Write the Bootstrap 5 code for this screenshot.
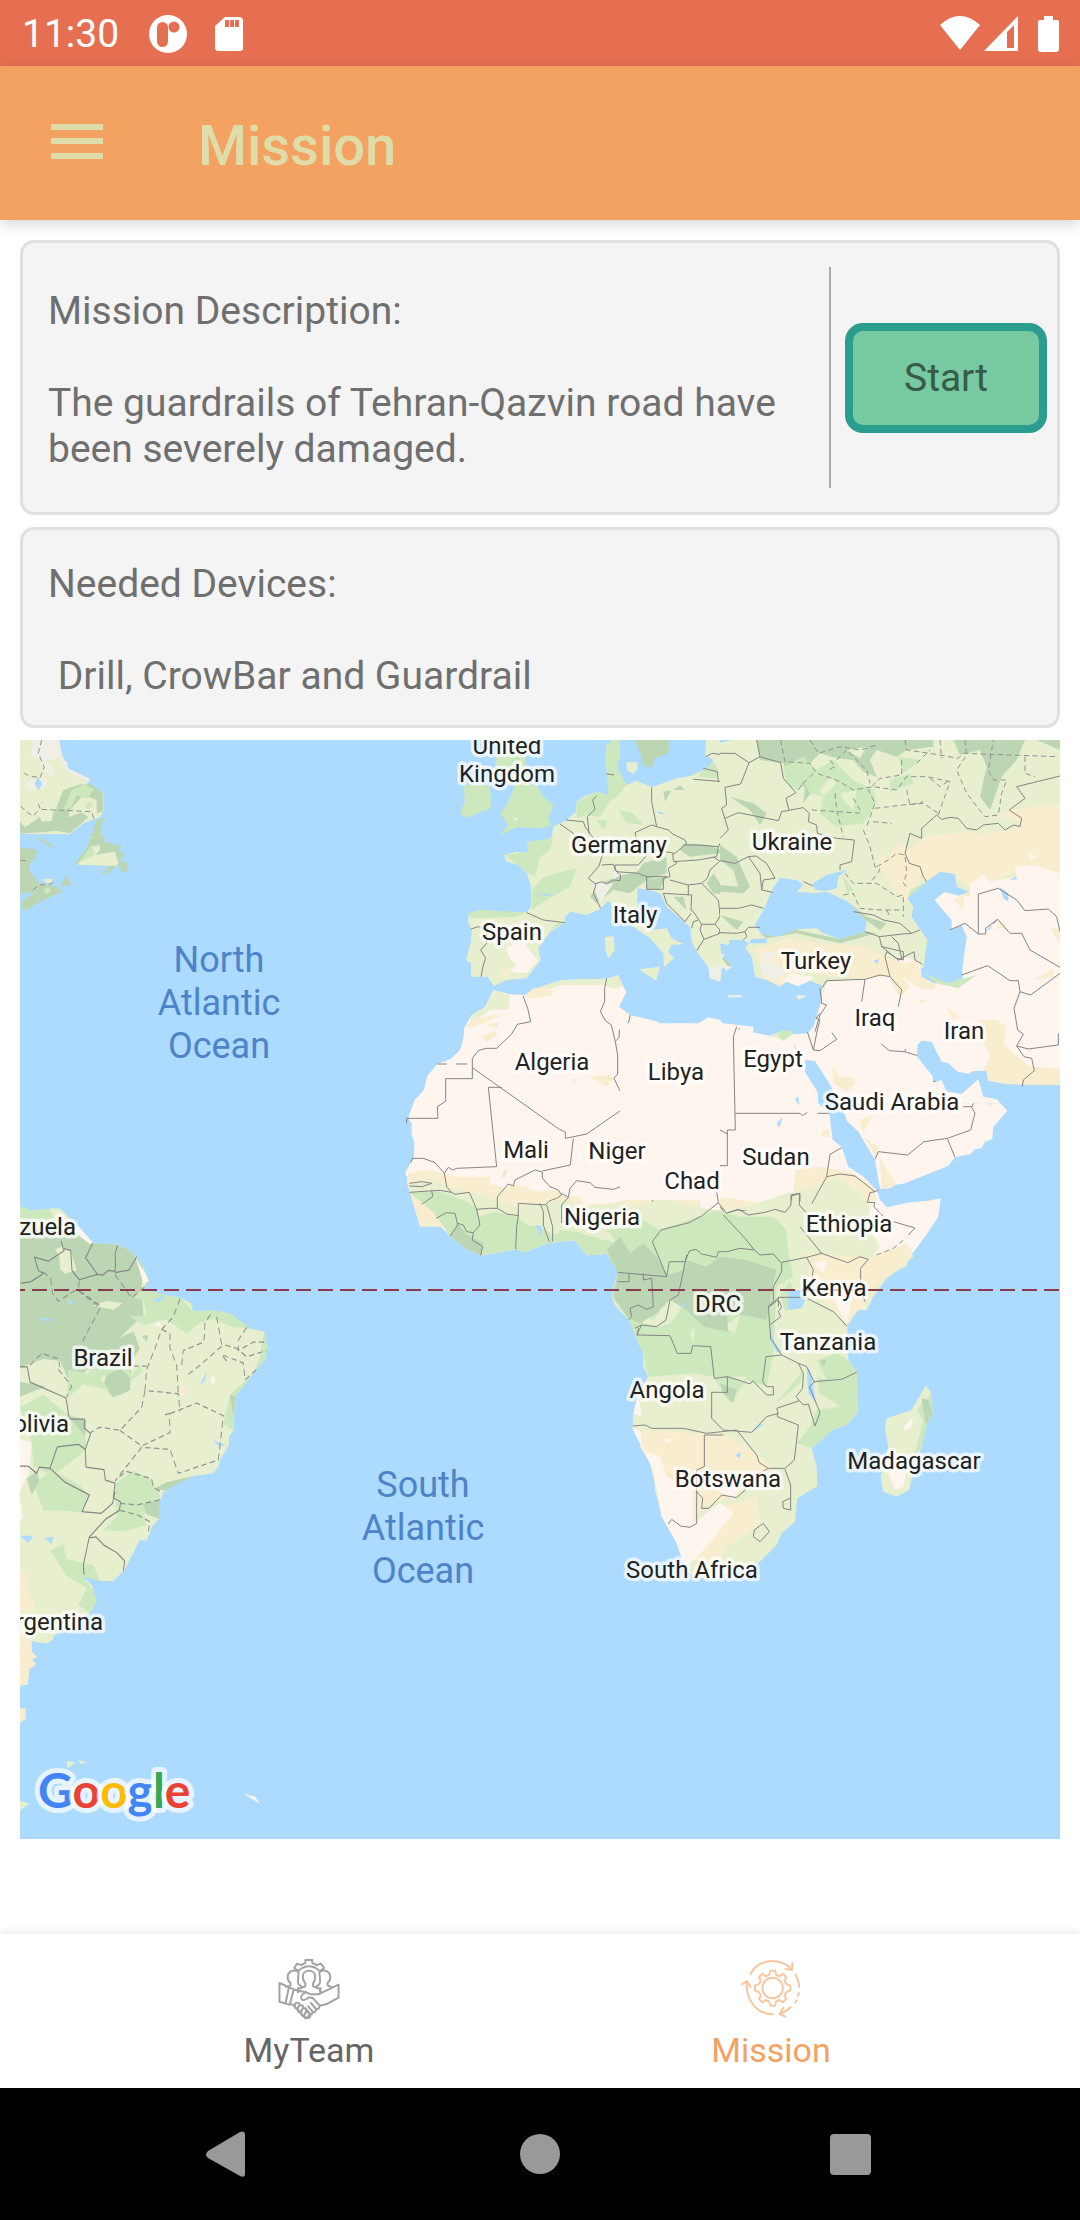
<!DOCTYPE html>
<html lang="en">
<head>
<meta charset="utf-8">
<meta name="viewport" content="width=device-width, initial-scale=1">
<title>Mission</title>
<link rel="stylesheet" href="https://cdn.jsdelivr.net/npm/bootstrap@5.3.0/dist/css/bootstrap.min.css">
<style>
  body { font-family: Roboto, "Liberation Sans", sans-serif; font-size: 39px; line-height: 46px; color: #6f6f6f; background: #fff; }
  .status-bar { height: 66px; background: #e76f51; color: #fff; padding: 2px 20px 0 22px; }
  .app-bar { height: 154px; background: #f4a261; padding: 0 48px; box-shadow: 0 4px 14px rgba(0,0,0,.16); z-index: 1; }
  .app-title { font-size: 56px; line-height: 64px; font-weight: 500; color: #deddaa; margin: 6px 0 0 92px; }
  .menu-btn { color: #deddaa; width: 58px; height: 58px; margin-bottom: 12px; }
  .content { padding: 20px 20px 32px; gap: 12px; }
  .panel { background: #f4f4f4; border: 3px solid #e0e0e0; border-radius: 14px; }
  .panel-main { padding: 24px 10px 24px 25px; }
  .panel-devices { padding: 31px 25px 26px; }
  .copy { padding: 21px 0 16px; }
  .rule { width: 3px; background: #aaa; }
  .start-btn { width: 202px; height: 110px; border: 8px solid #2a9d8f; border-radius: 18px; background: #76c9a0; color: #385b49; font-size: 39px; line-height: 46px; margin-left: 14px; }
  .start-btn:hover { background: #6abf95; border-color: #2a9d8f; color: #385b49; }
  .world { width: 100%; height: auto; background: #addaff; }
  .world text { font-family: Roboto, "Liberation Sans", sans-serif; font-size: 24px; fill: #222; text-anchor: middle; }
  .halo { stroke: #fff; stroke-opacity: .72; stroke-width: 7px; stroke-linejoin: round; paint-order: stroke; }
  .world .ends { text-anchor: end; }
  .world .ocean { font-size: 36px; fill: #4d83c8; }
  .world .brand { font-family: Lato, Roboto, sans-serif; font-size: 48px; text-anchor: start; stroke-width: 10px; }
  .sand { fill: #fff5ef; } .grass { fill: #e7efcf; } .leaf { fill: #cee8be; } .wood { fill: #bcd6b4; } .dune { fill: #f8eecf; } .sea { fill: #addaff; } .snow { fill: #efeee7; }
  .edge { fill: none; stroke: #858585; stroke-width: 3; stroke-linejoin: round; }
  .prov { fill: none; stroke: #929292; stroke-width: 3; stroke-dasharray: 16 10; }
  .tabs { height: 154px; background: #fff; box-shadow: 0 -3px 8px rgba(0,0,0,.07); padding: 0 78px; font-size: 34px; line-height: 40px; }
  .tab-link { color: #666; text-decoration: none; padding: 4px 0 0; gap: 9px; }
  .tab-link.active { color: #f4a261; }
  .line-art { fill: none; stroke-width: 2; stroke-linecap: round; stroke-linejoin: round; }
  .line-art * { vector-effect: non-scaling-stroke; }
  .system-bar { height: 132px; background: #000; gap: 250px; }
  .system-bar button { width: 60px; height: 60px; color: #999; }
</style>
</head>
<body class="d-flex flex-column min-vh-100">

<div class="status-bar d-flex align-items-center justify-content-between">
  <div class="d-flex align-items-center">
    <span>11:30</span>
    <svg class="ms-4" width="50" height="44" viewBox="0 0 50 44" aria-hidden="true"><circle cx="25" cy="22" r="19" fill="#fff"/><rect x="14" y="10" width="11" height="25" rx="5.500" fill="#e76f51"/><circle cx="31" cy="15" r="5.500" fill="#e76f51"/></svg>
    <svg class="ms-3" width="44" height="44" viewBox="-4 0 44 44" aria-hidden="true"><path d="M12 5H26Q30 5 30 9V36Q30 39 27 39H5Q2 39 2 36V14Z" fill="#fff"/><path d="M12 8h4v7h-4zM17 8h4v7h-4zM22 8h4v7h-4z" fill="#e76f51"/></svg>
  </div>
  <svg width="122" height="44" viewBox="0 0 122 44" fill="#fff" aria-hidden="true"><path d="M2 13Q22 -5 42 13L22 38Z"/><path fill-rule="evenodd" d="M46 39 80 4V39ZM69 20V36H76V13Z"/><path d="M106 4h9v4h4q2 0 2 2v27q0 3-3 3h-15q-3 0-3-3V10q0-2 2-2h4Z"/></svg>
</div>

<header class="app-bar d-flex align-items-center position-relative">
  <button class="menu-btn btn p-0 border-0" type="button" aria-label="Open menu"><svg class="d-block" width="58" height="58" viewBox="0 0 58 58" fill="currentColor"><path d="M3 16h52v6H3zM3 30h52v6H3zM3 45h52v6H3z"/></svg></button>
  <h1 class="app-title">Mission</h1>
</header>

<main class="content d-flex flex-column flex-grow-1">
  <section class="panel panel-main d-flex align-items-stretch">
    <div class="copy flex-fill pe-5">
      <p class="mb-0">Mission Description:</p>
      <br>
      <p class="mb-0">The guardrails of Tehran-Qazvin road have been severely damaged.</p>
    </div>
    <div class="rule"></div>
    <button class="start-btn btn p-0 flex-shrink-0 align-self-center" type="button">Start</button>
  </section>

  <section class="panel panel-devices">
    <p class="mb-0">Needed Devices:</p>
    <br>
    <p class="mb-0">&nbsp;Drill, CrowBar and Guardrail</p>
  </section>

  <svg class="world d-block" viewBox="20 740 1040 1099" role="img" aria-label="World map">
    <g transform="scale(.3333333)">
      <!-- Canada and Newfoundland -->
      <g transform="translate(0 2190)">
        <path class="grass" d="M60 30H178L185 70 203 115 270 147 262 160 310 190V245L300 262 250 280 210 313 60 312Z"/>
        <path class="snow" d="M100 30H175L185 70 160 90 140 90 125 110 115 85 92 80ZM135 98 160 108 158 138 130 125ZM75 160 108 148 140 145V170L85 182ZM175 75 203 98V115L270 147 262 155 196 120Z"/>
        <path class="wood" d="M170 230 190 180 235 165 270 160 308 190V245L290 250 290 210 250 195 210 240 205 262 245 247 265 262 210 310 170 303 60 311V275L75 292 120 260 125 275 155 273 160 248Z"/>
        <path class="leaf" d="M215 180 255 162 280 178 262 205 230 195 215 230 190 240 205 205ZM255 228 268 212 280 225 265 240Z"/>
        <path class="sea" d="M113 140 127 162 115 180 104 162Z"/>
        <path class="wood" d="M110 325 130 328 168 354 150 350ZM60 352 112 360 108 380 90 400 90 425 120 460 170 470 185 480 185 487 110 520 80 543 66 535V515L102 487 60 490ZM290 270 315 262 302 290 303 315 315 325 313 335 362 347 358 365 372 370 360 395 383 397 383 425 370 430 355 405 318 433 305 430 330 408 230 405 228 395 260 355Z"/>
        <path class="grass" d="M232 404 275 350 298 345 300 360 285 375 345 365 355 400 350 408ZM125 448 160 446 150 465Z"/>
        <path class="wood" d="M180 470 200 435 213 465Z"/>
        <path class="leaf" d="M240 395 275 345 285 372 265 385ZM130 480 143 470 152 482 140 492ZM268 325 275 318 278 328Z"/>
        <path class="prov" d="M125 30 115 70 133 112 120 143 88 138 62 124M62 228 78 245 100 258 120 235 115 222 128 218M125 238 275 245 282 268M62 391 86 393M98 480 120 465 150 462 165 455"/>
      </g>
      <!-- South America -->
      <g transform="translate(0 3540) scale(1 1.2627)">
        <path class="grass" d="M60 63 95 73 150 68 180 68 240 115 280 150 350 153 395 170 428 205 447 240 425 260 490 272 540 280 572 292 580 312 640 310 690 317 750 353 792 360 803 400 795 425 705 515 700 595 687 610V630L660 665 655 682 640 697 580 703 550 715 525 720 495 738 480 760 478 805 457 822 440 857 420 855 375 925 340 953 300 953 285 943 250 942 278 965V975L290 1000 270 1030 200 1060 160 1085V1092L140 1102 95 1095V1120L112 1133 95 1140 108 1150 88 1163 83 1198 60 1202Z"/>
        <path class="wood" d="M60 130 180 90 240 120 280 150 350 153 395 170 428 205 425 262 430 320 360 375 400 360 420 400 395 430 390 500 340 517 310 490 320 460 260 450 220 500 180 430 130 425 60 445Z"/>
        <path class="leaf" d="M60 63 95 73 150 68 160 90 60 130ZM425 260 540 280 580 312 640 310 690 317 750 353 700 350 640 330 600 340 560 365 500 330 430 345 390 325 440 320 430 285 400 280ZM792 360 803 400 795 425 705 515 700 595 670 580 690 510 760 460 780 420ZM205 450 260 460 300 440 360 445 390 470 420 440 430 455 395 475 385 440 300 470 330 500 250 485 200 520ZM60 540 130 510 200 555 250 570 260 640 180 690 150 700 100 680 95 620ZM100 720 160 690 240 725 265 750 240 790 190 785 130 785ZM345 722 400 690 450 710 480 750 478 805 430 790 440 820 370 835 310 832 350 800ZM150 880 190 865 200 900 280 915 300 953 250 942 280 975 290 1000 270 1030 235 1010 260 970 200 940Z"/>
        <path class="wood" d="M425 370 445 368 440 385ZM430 770 480 760 478 805 440 795ZM60 480 140 490 60 515ZM80 710 110 690 118 715 95 748ZM495 738 580 703 500 718 460 735ZM690 510 706 515 700 560ZM205 560 260 570 255 610Z"/>
        <path class="grass" d="M165 165 185 158 212 168 230 215 195 222 180 212 178 180ZM280 298 320 287 368 293 340 308ZM590 412 622 405 610 418ZM310 590 350 580 400 590 360 610ZM380 655 440 640 400 690Z"/>
        <path class="dune" d="M60 935 82 930 80 975 102 1000 105 1025 60 1030ZM60 1075 95 1095V1120L112 1133 95 1140 108 1150 88 1163 83 1198 60 1202ZM60 1255H77V1280L60 1290ZM540 495 555 490V512L540 515Z"/>
        <path class="sand" d="M60 615 95 625 85 700 60 740ZM60 760 70 800 60 810ZM630 475 640 465 648 478 638 487ZM235 110 280 150 270 152 220 122ZM405 180 447 240 430 245ZM465 345 475 335 488 350Z"/>
        <path class="sea" d="M60 845H100L85 862ZM133 850 160 848 155 865ZM600 485 620 455 613 480ZM640 618 677 630 655 632ZM110 325 160 332 140 336ZM200 285 223 290 215 297ZM460 285 500 270 475 292Z"/>
        <path class="grass" d="M200 1381 228 1382 203 1398ZM235 1378 262 1385 240 1387ZM60 1475 88 1482 60 1497ZM735 1460 740 1458 780 1482 755 1470Z"/>
        <path class="sand" d="M735 1460 765 1465 780 1482Z"/>
        <path class="edge" d="M62 245 92 242 130 222 115 215 103 183 145 193 192 168 183 145M192 163 212 167 216 215 238 237 292 224 257 185 278 150M292 224 308 226 325 215 345 217 347 200 345 175 353 155M345 220 387 214 410 182M60 444H82L90 480 190 515 198 518 208 568H253V590L272 602 256 640 258 682 312 688 316 713 345 720 340 755 362 765 358 785 318 805 268 848 250 915 252 938M60 680H85L110 697 118 682 150 685 172 634 235 628 256 640M150 685 195 718 268 748 246 788 304 792 338 768 345 740M268 850 288 848 312 868 350 885 374 905 370 928"/>
        <path class="prov" d="M130 218 152 235 158 270 175 288 230 260 290 297 300 305 250 380 248 390M238 240 235 262 300 298M345 225 395 280 440 250M540 282 520 325 485 355 465 400 440 450 435 500 535 508 540 550M435 500 425 540 360 595 300 587 272 600M360 595 425 632 510 600 508 555 488 560M510 555 590 530 670 560 660 630 655 665 535 697 510 640 425 635 345 715 378 692 455 710 460 730 490 745M360 768 410 772 480 760M360 785 410 795 450 812 445 835M90 440 125 412 175 425 180 445M175 450 215 490 200 515M400 442H440M485 355 510 365V400L530 440 535 510M545 440 550 405 612 385 615 340 635 315M650 325 665 390 710 400 740 420 800 405M665 395 600 440 560 465M680 430 665 415 730 435 735 475 770 450M740 350 715 380V405L760 385 795 385"/>
      </g>
      <!-- Northern and western Africa -->
      <g transform="translate(1140 2880)">
        <path class="sand" d="M340 90 315 142 275 165 253 203 250 235 240 270 212 297 172 312 142 347 132 390 104 420 84 475 95 490V525L103 545 102 590 92 608 75 640 88 660V697L125 733 160 757 168 785 210 828 260 868 302 886 408 868 437 876 502 850 585 840 620 886 683 880 712 915 760 1000 1120 1020V200L1028 190 1020 180 985 172 948 195 950 230 917 240 890 222 845 210 835 185 750 165 717 140 739 97 714 46 680 56 545 60 470 85 440 105 390 103Z"/>
        <path class="dune" d="M85 640 140 630 195 640 230 650 330 650V672L380 685 400 672 480 695 530 690 560 710 640 705 700 720 780 700 830 690 860 710 1000 700 1080 745V800H120L80 665Z"/>
        <path class="grass" d="M340 90 390 105 385 147 330 150 300 172 270 190 275 165 315 142ZM440 105 470 85 545 60 680 56 714 46 730 80 700 85 670 75 545 75 500 90 480 105ZM88 670 150 655 200 680 270 697 350 720 400 740 480 730 560 720 600 740 730 730 790 750 850 710 930 745 1000 730 1080 770V1020H760L712 915 683 880 620 886 585 840 502 850 437 876 408 868 302 886 260 868 210 828 160 757 88 697ZM365 655 370 630 382 628 375 650Z"/>
        <path class="dune" d="M430 110 460 85 525 90 515 105 465 115ZM255 200 280 178 365 162 325 185 270 205ZM300 230 345 212 355 225 322 245ZM630 350 690 345 702 355 680 380ZM575 360 592 352 585 368ZM315 195 358 185 350 205Z"/>
        <path class="sand" d="M590 680 700 700 760 690 740 720 680 730 610 735Z"/>
        <path class="leaf" d="M88 697 180 695 250 720 290 745 295 770 345 755 410 770 440 795 480 800 520 825 580 800 640 815 660 840 700 860 760 800 840 810 930 770 1080 800V1020H760L712 915 683 880 620 886 585 840 502 850 437 876 408 868 302 886 260 868 210 828 160 757Z"/>
        <path class="wood" d="M210 828 235 790 255 820 310 850 302 886 260 868ZM683 880 700 860 750 830 780 870 840 880 870 905 930 865 1010 885 1080 880V1020H760L712 935Z"/>
        <path class="sea" d="M468 795 485 797 483 830Z"/>
        <path class="snow" d="M885 585 908 583 905 592 888 592ZM615 868 632 866 630 875ZM798 815 810 812 808 822Z"/>
        <path class="edge" d="M429 108 443 145 452 185 412 193 395 222 350 265H318L295 272 277 295V356H197V424L172 440 174 475H80V490M277 323 538 508 556 516V535L620 522 763 423 812 442 855 423 1042 522M680 55 674 85 674 125 661 155 677 183 694 195 706 245 713 285V342L702 355 720 393 752 402 763 423M751 165 746 187 718 210 717 233 707 243M1080 205 1068 215 1061 245 1066 510 1042 513V617H1015M365 382H325L350 620 230 625 218 630 205 622 193 640 165 608 130 595H98L92 608M580 535 571 615 487 633M193 640 200 680 214 697 225 703 268 697 280 725 290 748 325 745 352 745 380 762 415 767 410 800 407 868M88 697 180 691 214 697M125 733 158 710 155 690M88 670 125 665 155 670 125 680 88 678M352 745 352 710 385 672 400 678 405 660 465 630 487 636 487 655 510 680 535 690 545 705 530 715 510 722 495 735 415 730V770M480 730 490 755V795L508 845M500 735 518 800V845M545 700 565 712 545 735V840M565 712 570 685 590 662 630 668 645 682 700 688 735 675 800 665 802 640 843 600 855 502 840 490 835 433M800 665 822 715 800 755 770 820 740 835 728 820 700 845 682 880M802 668 832 700 848 752 810 762 842 812 820 848 860 947 790 940H712M842 812 925 780 965 770 1010 730 1037 760 1080 745M1015 700 1010 730M1030 765 1080 815M865 948 870 905H915M860 947 868 905M168 775 200 758 225 760 233 795 210 828M233 790 250 795 260 815 280 818 277 840 308 860 302 886M280 818 300 795 290 748M172 312H200M228 312H262"/>
      </g>
      <!-- Arabia, Iran, the Nile and the Horn -->
      <g transform="translate(2160 3000)">
        <path class="sand" d="M-300 70 0 70 48 78 50 88 150 107 262 100 280 80 305 0V-50H1020V256L908 258 860 253 805 243 798 212 760 214 745 222 712 215 685 190 665 187 635 125 605 122 592 135V170L636 225 640 248 665 240 680 275 725 282 775 238 790 290 830 298 862 332 820 380 817 417 795 425 785 445 765 447 752 462 705 472 685 497 555 550 525 555 510 565 480 567 465 480 415 395 380 362 375 345 328 250 285 183 255 180V215L292 275 295 310 328 340 338 420 365 440 385 500 430 530 470 570 480 600 500 622 570 607 620 603 662 595 655 650 615 710 580 757 545 800 500 835 450 890 440 930H-60V600H-300Z"/>
        <path class="dune" d="M770 60 830 60 860 80 850 130 880 160 930 200 1020 205V256L908 258 805 243 790 210 810 170 790 130ZM335 200 360 230 400 235 408 250 380 275 340 250ZM420 360 460 345 430 400ZM430 410 475 440 470 475ZM480 475 495 500 530 555 485 567ZM775 265 800 290 830 300 810 320 785 300ZM530 0 550 40 560 20ZM225 510 300 500 400 520 460 560 470 600 420 620 0 630V590L130 610 220 580ZM650 -10 720 0 700 50 640 30ZM306 392 328 385V412L306 410ZM262 770 430 770 540 740 560 790 500 835 450 890 440 930 300 930Z"/>
        <path class="grass" d="M0 640 110 610 200 580 290 560 350 530 420 580 450 620 440 700 430 770 330 780 260 775 280 830 330 860 350 930H-60V640ZM150 107 190 90 220 105 190 123ZM545 800 430 870 440 930 460 890 500 835Z"/>
        <path class="leaf" d="M-60 640H60L190 655 200 770 0 760ZM250 640 340 620 350 670 400 650 430 690 380 740 300 760 240 700ZM170 100 190 90 220 95 190 123Z"/>
        <path class="wood" d="M-60 780 20 765 120 790 160 820 150 930H-60Z"/>
        <path class="sea" d="M225 297 235 290 238 318ZM170 370 188 352 178 383ZM222 130 230 150 226 155ZM205 865 250 865V900H205Z"/>
        <path class="edge" d="M50 80 40 110 46 390H22V497H0M46 340H240L248 347 262 337M293 340H328M0 390 22 402M262 95 280 150 292 90 300 60 288 55 300 40M280 150 300 152 350 118 330 90 380 73 448 100 508 152 553 155 597 168M553 155 568 130 598 133M370 40 380 73M300 60 322 65 370 38 425 10V-10M535 0 540 45 577 75 580 105 600 132M885 -10 882 30 893 90 910 102 890 138 912 170 935 175 943 212 910 240 907 260M890 138 925 147 1015 135V100M465 478 475 455 563 465 612 425 682 415 752 390 765 340 755 322 770 290 775 238M682 415 705 472M730 320H755M365 443 330 463 320 530 265 630M320 530 360 522 405 528 465 575 450 578 442 607 465 608 462 620 490 650M465 575 475 570M520 665 585 684 565 705M0 620 15 640 50 630 75 632 115 642 165 627 195 638 215 615V588L240 580V610L265 645M235 675 265 705 305 762 385 788 420 770 445 775M235 675 240 645M10 650 80 715 105 755 0 760M105 755 120 765 160 768 185 787 258 770 305 762M185 787 190 820 165 850 155 900M258 770 280 808V840M445 775 422 805V850M118 632V645M660 240 650 248 640 243"/>
        <path class="prov" d="M550 720 520 745 470 765"/>
      </g>
      <!-- Central and southern Africa -->
      <g transform="translate(1680 3540)">
        <path class="grass" d="M0 130 300 60 520 100 700 60 900 100 960 200 930 240 1000 240 1060 200 1040 258 980 290 930 330 915 365 880 410 862 437V510L865 540 890 577 893 695 860 735 820 748 755 805 770 860 772 918 712 955 705 1025 665 1060 650 1095 600 1145 575 1160 530 1175 430 1195 400 1190 375 1165 375 1130 350 1090 330 1040 305 1010 285 930 280 870 250 810 217 745 220 700 235 640 265 590 250 560V520L235 490 225 450 205 420 165 375 155 350 160 320 173 275 175 260 140 222 80 226 43 180 0 180Z"/>
        <path class="leaf" d="M0 150 90 160 180 145 250 120 300 150 470 90 540 110 640 110 680 150 685 215 700 290 650 320 640 520 620 620 560 600 510 670 460 590 400 580 265 590 250 520 205 420 155 350 173 275 140 222 80 226 43 180 0 180ZM770 540 830 520 865 540 890 577 893 695 860 735 820 748 755 805 710 790 750 740 770 690 840 680 780 640 770 590 800 600 780 560ZM660 350 690 300 700 330 680 400ZM640 680 730 570 720 610 660 660Z"/>
        <path class="grass" d="M280 420 330 350 380 340 360 390 330 430 300 440 250 430 240 390ZM490 440 540 405 525 460ZM390 460 405 440 400 490ZM510 590 560 590 550 605ZM60 160 100 140 150 160 170 190Z"/>
        <path class="wood" d="M140 210 180 170 210 220 250 190 290 230 320 285 370 270 380 240 440 260 480 230 560 240 650 270 640 310 620 420 580 410 500 400 505 455 430 440 380 390 330 360 290 400 240 430 205 415 160 350 173 275ZM480 610 530 630 520 670 490 640ZM780 540 800 540 790 560Z"/>
        <path class="dune" d="M740 220 900 230 930 240 1040 190 1060 230 980 290 930 330 915 365 860 430 830 400 760 340 750 290ZM250 750 430 760 500 765 570 810 640 860 560 930 420 985 400 1040 350 1000 290 930 270 850 240 800ZM480 980 590 950 600 1030 500 1100 480 1150 400 1140 430 1080 420 1020Z"/>
        <path class="sand" d="M217 745 240 750 250 810 300 830 320 890 400 930 400 1030 480 970 520 1000 440 1100 400 1140 375 1165 350 1090 305 1010 280 870ZM220 700 235 640 245 710ZM310 780 340 775 320 790ZM760 250 800 240 790 280ZM820 360 880 340 860 430ZM440 910 560 890 520 960Z"/>
        <path class="sea" d="M685 330 730 330 735 360 725 385 685 390ZM630 435 640 480 665 520 650 515 630 475ZM740 560 750 570 760 620 768 668 745 640ZM580 755 595 735 615 730ZM525 825 543 817 538 835ZM362 375 375 365 372 390Z"/>
        <path class="grass" d="M1098 615 1113 640 1118 700 1100 735 1085 800 1060 870 1048 930 1010 950 970 935 962 890 985 800 975 745 980 715 1055 690Z"/>
        <path class="leaf" d="M1113 640 1118 700 1100 735 1085 800 1062 830 1090 720 1070 690Z"/>
        <path class="wood" d="M1085 655 1105 660 1118 700 1098 735 1090 690Z"/>
        <path class="sand" d="M1030 740 1055 715 1060 735 1035 755ZM985 880 1040 870 1030 920 1005 930Z"/>
        <path class="edge" d="M173 277 320 290 328 245H375L388 213 408 208 425 222 470 232 475 215 500 215 540 205 583 210 600 225 640 222 665 250V275L640 320V362L625 380 632 475 665 525 715 550 740 560 762 605 845 598 890 577M320 290 277 185 303 150 387 128 425 108 475 68 500 100 535 88 565 105 615 97 645 88 675 97 693 75V45L718 40V75L740 100M470 35 475 68M490 105 555 175 583 210M740 232 785 220 720 140M785 220 863 248 900 230 925 238 902 265V330M665 247 740 232 760 270 755 300M380 225 355 345 330 360 318 420 290 440 245 435 230 465 330 467 352 520H393L398 497 452 500 463 595 502 590V637H455V715L490 750 575 757 620 710 655 700 650 685 718 662M502 590 535 600 570 612 578 602 620 645H640V620L620 620 608 605 618 530 665 525M218 738 255 735 275 745 370 745 440 760 530 750M490 765H433V860L410 870V1030L390 1042 362 1038 335 1018 325 1032M530 750 590 825 598 848 625 865H675L703 840 715 735 652 710V700M675 868 692 915V990L670 985 668 965 690 955M410 935 428 955 425 985H447L485 945 530 953 555 930 580 890 625 865M610 1030 628 1055 600 1085 580 1070 583 1050ZM715 550 730 580 728 625 708 650 730 675 745 672 765 738 780 697 748 620 765 605M630 380 655 352H735L820 395 860 438M625 380 655 360 665 380 655 395 662 410 632 433M655 352V380M173 305H207V280M250 280V300L275 295 280 380 260 388 235 375 210 385 215 410 205 420M225 445 245 435M235 445 232 465M915 365 902 330"/>
      </g>
      <!-- Europe -->
      <g transform="translate(1200 2190)">
        <path class="grass" d="M205 555 235 540 330 548 380 547 393 530V470L380 430 355 405 320 395 312 375 350 365 385 370 380 335 420 345 455 320 460 290 500 270 528 245 530 215 550 200 590 185 625 195 625 150 617 95 620 45 640 30H660L658 85 650 110 655 140 680 165 710 152 755 172 830 145 870 138 900 125 925 115 940 90 915 75 918 30H1000V628H990L985 645 960 640 965 680 995 712 965 715 960 755 930 745 925 710 890 665 875 635 870 590 800 530 780 490 745 480 712 475V510L720 565 750 600 800 595 815 625 850 642 815 645 805 665 822 685 792 712 790 670 750 625 700 590 680 560 640 530 625 512 600 538 560 555 512 545 495 560 493 580 450 605 415 655 422 690 380 745 320 750 282 768 262 740H213V700L198 690 212 640 215 600 205 580ZM680 97H712V115L700 132 680 120ZM615 622 640 618 645 660 625 685 617 660ZM717 718 780 710 768 752Z"/>
        <path class="leaf" d="M620 45 640 30H660L658 85 650 110 680 165 650 200 630 215 600 260 560 255 530 265V215L590 185 625 195 617 95ZM345 165H410L425 195 460 225 445 265 455 285 430 295 350 292 300 315 325 285 300 250 325 215ZM190 165H270L273 235 195 265 180 245 195 215ZM290 30H370L385 165H320L285 110ZM312 375 385 365 380 335 460 325 450 360 420 380 405 440 380 430 355 405ZM430 440 530 415 510 470 440 510 395 540V480ZM655 240 700 250 730 285 680 280ZM590 270H625L610 300ZM205 550 235 540 380 547 350 560 210 565ZM450 600 470 580 493 580ZM905 125 940 95 955 120 950 145 890 140Z"/>
        <path class="wood" d="M705 30H808L805 70 765 85 755 115 730 105 720 70ZM600 460 650 440 710 425 730 400 800 380 800 430 740 450 690 490 640 480 590 520 570 500ZM850 340 930 345 960 360 1020 390V420L960 370 870 380 840 360ZM790 185 815 180 795 215ZM820 180 840 165 855 180ZM940 430 960 460 1020 480V500L940 490 920 460ZM740 450 800 440 780 478H740ZM820 500 860 540 850 500ZM965 580 1020 570V610Z"/>
        <path class="snow" d="M575 460 640 460 600 520ZM640 420 665 430 640 450ZM335 262 352 264 350 272ZM710 405 722 412 712 420ZM925 710 995 712 965 715 960 755 930 745ZM975 797H1020V802Z"/>
        <path class="dune" d="M295 730 335 710 320 745ZM345 570 395 575 380 600Z"/>
        <path class="sand" d="M320 650 370 635 390 665 415 690 380 730 330 725 350 705 325 680Z"/>
        <path class="sea" d="M410 493 467 492 440 498ZM770 243 800 252 778 252Z"/>
        <path class="edge" d="M620 132 642 135M590 198 578 210 585 238 562 260 567 310 600 340 610 365 597 408 565 445 588 463 580 490 602 535M480 282 520 310 545 345M498 270 550 275 555 290 570 310M755 172 755 215 770 290 755 285 705 308 710 330M770 290 805 300 818 312 855 330 860 340 825 370 795 365M818 370 820 390 830 400 805 415 810 440 790 445 790 478H740V440M820 395 895 390 950 380 955 350 890 345 855 345M955 350 985 295 965 235 982 215 970 155 880 148M605 405 640 403 650 425 715 430 740 440 800 440M585 462 605 455 620 462 640 450 660 452 662 435 645 420V405H715L745 370M918 80 935 70 1020 80M910 115 952 125 955 155M975 170 1020 162M978 262 1020 250M940 380 958 393 1020 398M958 395 930 420 922 445 905 460 865 465 810 450M905 460 955 510 958 535 1020 538M958 535 960 560 945 583 905 583 900 600 912 628 890 662M905 583 880 545 873 540 875 495 790 490 800 520 855 575 873 550M945 583 960 600 955 612 912 628M875 595 880 575 895 570M865 465V495M380 548 430 570 495 578M213 597 235 590 260 600 260 640 242 660 257 685 250 705 243 740M955 610 1020 612"/>
      </g>
      <!-- Eastern Europe, Turkey and central Asia -->
      <g transform="translate(2160 2190)">
        <path class="grass" d="M0 30H1020V560H800L600 720 480 760 310 790 303 765 270 752 235 768 200 755 180 770 140 750 105 740 95 680 75 655 88 640 70 630 35 630 0 628Z"/>
        <path class="wood" d="M110 30H640V50L560 60 530 80 470 60 450 90 470 140 430 125 400 90 350 85 300 70 270 100 280 180 250 220 255 170 210 170 190 100 120 90ZM700 30H915L890 90 845 140 810 240 780 200 800 110 780 60 720 75ZM0 345 50 380 90 470 70 490 0 485V465L55 470 40 420 0 390ZM120 140 160 180 130 150ZM30 200 100 220 140 250 120 285 90 240ZM0 675 30 700V720ZM120 610 230 600 360 627 435 605 470 610 360 640 230 610 140 625ZM950 30H1020V60ZM390 520 440 560 500 580 480 600 430 565ZM0 555 70 575 50 600Z"/>
        <path class="leaf" d="M190 110 250 80 290 120 340 90 400 150 460 180 470 220 430 280 350 290 300 250 310 200 270 190 250 150 230 180 200 160ZM510 150 570 130 580 160 510 185ZM535 80 600 90 550 130ZM370 440 400 480 380 490Z"/>
        <path class="grass" d="M300 180 330 140 350 160 310 200ZM360 190 410 180 400 240 370 210ZM380 60 440 50 420 85Z"/>
        <path class="dune" d="M870 240 1020 220V440L960 450 880 430 830 450 760 480 690 430 610 450 550 375 605 325 650 315 740 305 800 310 860 300 905 290 900 270 830 260ZM500 390 530 345 550 340 600 440 560 520 520 480 470 395 490 370ZM100 660 200 625 300 640 440 650 500 680 510 735 440 745 340 740 240 720 180 765 130 745 120 700Z"/>
        <path class="sand" d="M1020 430 935 405 885 410 890 440 810 455 790 435 750 460V500L660 485 645 510 700 600 740 620 725 730 705 770 650 765 605 740 600 700 560 680 500 690 510 735 440 745 320 755 300 830V900L1020 1060ZM925 370 952 380 935 390ZM180 760 210 730 280 740 270 752 235 768 200 755Z"/>
        <path class="snow" d="M130 665 175 665 150 695 195 720 165 752 125 725ZM20 796 60 795 70 800 30 803ZM228 795 260 797 235 810ZM0 670 15 675 0 690ZM0 700 35 712 20 722Z"/>
        <path class="dune" d="M500 690 530 680 545 700 590 690 605 740 650 765 640 780 600 775 545 740 570 770 540 800 515 760ZM820 600 850 575 860 590ZM990 590 1020 600V640ZM700 510 735 490 730 540ZM940 750 1000 715 1000 740ZM680 830 720 860 700 870ZM590 805 625 815 600 820Z"/>
        <path class="leaf" d="M610 728 680 760 770 735 715 775 650 760ZM570 480 620 455 565 505Z"/>
        <path class="dune" d="M770 870 830 870 860 890 850 940 880 970 930 1010 1020 1015V1066L908 1068 805 1053 790 1020 810 980 790 940Z"/>
        <path class="sea" d="M592 945 605 932 635 935 665 997 685 1000 712 1025 745 1032 760 1024 798 1022 805 1053 860 1063 1020 1066V1120H700L725 1092 680 1085 636 1035 592 980Z"/>
        <path class="sand" d="M636 1035 640 1058 665 1050 680 1085 725 1092 775 1048 790 1100 830 1108 840 1120H600V1000Z"/>
        <path class="sea" d="M160 475 180 443 230 450 250 465 230 485 285 490 320 485 385 515 440 575 435 605 360 627 310 610 290 595 235 597 170 620 125 612 105 585 130 540ZM280 460 320 435 380 420 355 440 350 475 315 483 285 480ZM562 505 620 455 660 425 705 432 710 470 745 485 715 497 675 485 643 510 695 570V600L725 585 742 625 700 640 725 660 728 748 680 752 610 715 622 630 575 560 580 530ZM90 628 140 625V640H90ZM838 470 865 490V515L850 505ZM870 450 885 440 895 447ZM460 692 480 687 470 702ZM0 30H35L0 38ZM800 600 815 585 810 600Z"/>
        <path class="edge" d="M110 30 120 80 182 98 190 145 228 188 198 205 207 240M0 70 45 70 87 98 62 162 15 172 20 225 5 235 25 300 0 325M87 98 120 80M15 265 55 248 175 272 185 245 250 233 268 250 265 275 290 285 292 310 350 325 403 330 395 395 360 405V420M0 392 45 400 85 380 108 378 140 400 165 445 130 450 125 480 158 487M85 380 120 430 125 480M0 535 55 535 95 525 130 535M0 608 50 610 75 605 85 592 120 592M75 605 80 620 70 630M250 455 280 468M400 545 460 555 490 570 540 580 575 610 600 600M435 605 478 620 548 612 575 610M478 620 485 650 535 690 545 685 535 640 515 620M535 690 582 665 585 690 607 703M485 650 550 665V690L530 685 500 665 495 680 510 740 545 780 535 830M305 775 320 752 435 748 480 735 510 740M435 748 425 815M300 775 305 820 320 825 300 855 285 905M1020 138 890 170 915 205 868 240 905 265 900 290 880 285 855 300 835 280 790 285 770 300 740 295 715 265 690 262 665 268 650 255 605 295V325L570 310 555 370 568 400 600 410 610 440 620 455M775 492V612M775 492 835 475 890 510 915 542 985 537 1010 560 1020 605M690 600 735 580 775 612H797V595L833 568 870 610H905L930 660 1020 712M833 568 820 580M725 735 803 707 870 752H895L900 785 882 835 893 900 910 912 890 948 912 980 935 985 943 1022 910 1050 907 1070M900 785 932 795 1020 730M890 948 925 957 1015 945V910"/>
        <path class="prov" d="M182 30 195 95 270 100 290 130 350 150 400 180 460 170 530 180 560 140 620 140 690 155 655 255M270 30 295 70 360 50 420 60 470 45M280 130 250 160 230 185M350 90 380 60 440 120 450 160M555 30 560 60 630 70 715 85 730 70 1010 80M660 30 665 85M735 30 740 75 710 120 740 190 795 260 835 255 845 190 860 150 820 150 805 120 820 30M915 80V130L945 140M545 90 545 135 480 145 445 180 465 220 440 290M590 100 630 60M465 235 550 225 610 220 655 250M460 275 515 280M430 300 450 350 465 410 480 420 450 460M470 410 505 390 530 370 555 375 560 430 550 460 565 475M345 190 350 240 370 320M275 240 350 245 430 250M375 430 400 460 470 460 530 500 550 495V560M370 495 400 490 420 535 480 540 540 540M400 205 420 240M500 540 510 560M330 90 345 110 325 120M630 145 660 170 690 150M560 180 570 225 610 215"/>
      </g>
    </g>

    <path d="M20 1290H1060" stroke="#8b3a4e" stroke-width="2" stroke-dasharray="15 7" stroke-dashoffset="10"/>

    <g class="halo">
      <text x="507" y="754">United</text><text x="507" y="782">Kingdom</text>
      <text x="619" y="853">Germany</text><text x="635" y="923">Italy</text><text x="512" y="940">Spain</text>
      <text x="792" y="850">Ukraine</text><text x="816" y="969">Turkey</text><text x="875" y="1026">Iraq</text>
      <text x="964" y="1039">Iran</text><text x="773" y="1067">Egypt</text><text x="892" y="1110">Saudi Arabia</text>
      <text x="552" y="1070">Algeria</text><text x="676" y="1080">Libya</text><text x="526" y="1158">Mali</text>
      <text x="617" y="1159">Niger</text><text x="692" y="1189">Chad</text><text x="602" y="1225">Nigeria</text>
      <text x="776" y="1165">Sudan</text><text x="849" y="1232">Ethiopia</text><text x="834" y="1296">Kenya</text>
      <text x="718" y="1312">DRC</text><text x="828" y="1350">Tanzania</text><text x="667" y="1398">Angola</text>
      <text x="914" y="1469">Madagascar</text><text x="728" y="1487">Botswana</text><text x="692" y="1578">South Africa</text>
      <text x="103" y="1366">Brazil</text>
      <text class="ends" x="76" y="1235">Venezuela</text><text class="ends" x="69" y="1432">Bolivia</text><text class="ends" x="103" y="1630">Argentina</text>
    </g>
    <text class="ocean" x="219" y="972">North<tspan x="219" dy="43">Atlantic</tspan><tspan x="219" dy="43">Ocean</tspan></text>
    <text class="ocean" x="423" y="1497">South<tspan x="423" dy="43">Atlantic</tspan><tspan x="423" dy="43">Ocean</tspan></text>
    <text class="brand halo" x="38" y="1808" font-weight="700"><tspan fill="#4285f4">G</tspan><tspan fill="#ea4335">o</tspan><tspan fill="#fbbc05">o</tspan><tspan fill="#4285f4">g</tspan><tspan fill="#34a853">l</tspan><tspan fill="#ea4335">e</tspan></text>
  </svg>
</main>

<nav class="tabs d-flex" aria-label="Sections">
  <a class="tab-link d-flex flex-column align-items-center justify-content-center flex-fill w-50" href="#team">
    <svg class="line-art" width="64" height="64" viewBox="139 112 156 192" preserveAspectRatio="none" stroke="#a3a3a3" aria-hidden="true">
      <path d="M190 152 181 145 188 132 198 136 208 130V121H225V130L236 136 246 132 254 145 246 152M193 152Q204 140 217 140T241 152M190 205V218M245 205V218"/>
      <path d="M208 191V200L191 208V216M227 191V200L244 208V216M208 190Q202 184 202 170C202 148 232 148 232 170Q232 184 227 190"/>
      <path d="M192 158C180 146 165 155 165 173Q165 184 172 190V197L162 202M192 158Q188 190 192 194L200 202M242 158C254 146 269 155 269 173Q269 184 262 190V197L272 202M242 158Q246 190 242 194L234 202"/>
      <path d="M145 190 180 209 170 255 145 246ZM168 203 160 250M180 209Q192 215 208 217L222 224 240 224 289 195V234L262 252 243 258M208 219Q194 228 199 239Q207 245 216 233L226 235 243 258Q242 270 234 268L222 250M234 268Q234 280 226 276L215 260M226 277Q226 287 219 282L208 266M220 284Q222 294 215 295L205 292 183 262 175 254"/>
      <path d="M183 262Q180 250 188 249T193 258 184 266M190 272Q188 258 197 257T201 268 191 276M198 282Q197 267 205 266T209 278 199 286M206 292Q205 277 213 277T216 288 207 295"/>
    </svg>
    <span>MyTeam</span>
  </a>
  <a class="tab-link active d-flex flex-column align-items-center justify-content-center flex-fill w-50" href="#mission" aria-current="page">
    <svg class="line-art" width="64" height="64" viewBox="1274 112 156 192" preserveAspectRatio="none" stroke="#f8c7a0" aria-hidden="true">
      <ellipse cx="1356" cy="205" rx="25" ry="31"/>
      <path d="M1350 153H1362L1364 165 1373 170 1381 162 1389 172 1385 184 1390 194 1399 198V213L1390 217 1385 227 1389 238 1381 248 1373 241 1364 246 1362 258H1350L1348 246 1339 241 1331 248 1323 238 1327 227 1322 217 1313 213V198L1322 194 1327 184 1323 172 1331 162 1339 170 1348 165Z"/>
      <path d="M1302 163C1322 117 1370 112 1403 148M1404 130V150L1387 148M1281 194 1293 184 1302 202M1293 186C1289 239 1317 284 1357 284M1412 165Q1420 182 1421 202M1420 220 1418 228M1414 242 1411 249M1400 262Q1390 276 1374 282M1382 264 1373 283 1387 291"/>
    </svg>
    <span>Mission</span>
  </a>
</nav>

<div class="system-bar d-flex align-items-center justify-content-center">
  <button class="btn p-0 border-0" type="button" aria-label="Back"><svg class="d-block" width="60" height="60" viewBox="0 0 60 60" fill="currentColor"><path d="M8 27 40 8Q45 6 45 11V50Q45 54 40 52L8 34Q4 31 8 27Z"/></svg></button>
  <button class="btn p-0 border-0" type="button" aria-label="Home"><svg class="d-block" width="60" height="60" viewBox="0 0 60 60" fill="currentColor"><circle cx="30" cy="30" r="20"/></svg></button>
  <button class="btn p-0 border-0" type="button" aria-label="Recent apps"><svg class="d-block" width="60" height="60" viewBox="0 0 60 60" fill="currentColor"><rect x="10" y="10" width="41" height="41" rx="4"/></svg></button>
</div>

<script src="https://cdn.jsdelivr.net/npm/bootstrap@5.3.0/dist/js/bootstrap.bundle.min.js"></script>
</body>
</html>
